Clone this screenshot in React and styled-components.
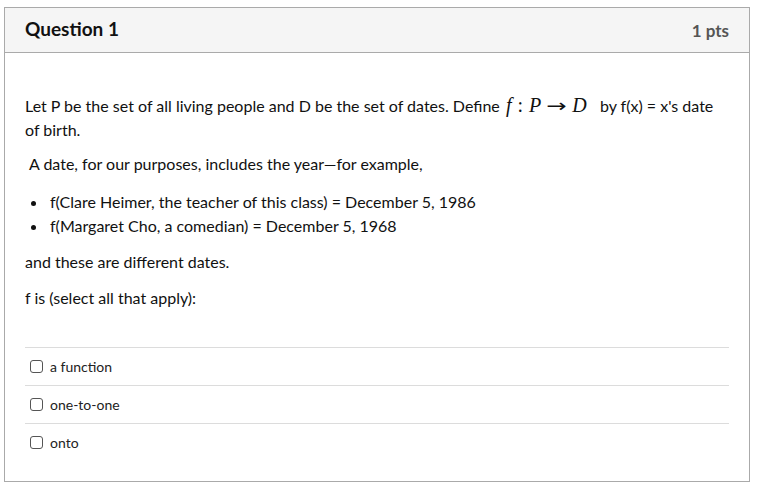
import React from "react";
import styled, { createGlobalStyle } from "styled-components";

const Global = createGlobalStyle`
  html, body { margin: 0; padding: 0; background: #fff; }
  body { font-family: Lato, "Open Sans", sans-serif; color: #2d3b45; }
`;

const Page = styled.div`
  padding: 7px 10px 0 4px;
`;

const Card = styled.div`
  width: 746px;
  box-sizing: border-box;
  border: 1px solid #aaaaaa;
  background: #fff;
`;

const Header = styled.div`
  height: 45px;
  box-sizing: border-box;
  display: flex;
  align-items: center;
  justify-content: space-between;
  padding: 0 20px;
  background: #f5f5f5;
  border-bottom: 1px solid #aaaaaa;
`;

const Title = styled.h2`
  margin: 0 0 3px 0;
  font-size: 19px;
  font-weight: 700;
  color: #111;
`;

const Points = styled.div`
  font-size: 17px;
  font-weight: 700;
  color: #555;
`;

const Body = styled.div`
  padding: 41px 20px 20px 20px;
  font-size: 16px;
  line-height: 24px;
  color: #111;
`;

const Para = styled.p`
  margin: 0 0 ${(p) => p.$mb ?? 12}px ${(p) => p.$indent || 0}px;
`;

const Math = styled.span`
  font-family: "Liberation Serif", "DejaVu Serif", serif;
  font-style: italic;
  font-size: 20px;
  line-height: 1;
  margin: 0 9px 0 2px;
  white-space: nowrap;
`;

const Op = styled.span`
  font-style: normal;
  font-family: "Liberation Serif", serif;
  font-size: 20px;
  line-height: 1;
  margin: 0 6px;
`;

const Arrow = styled.span`
  display: inline-block;
  font-style: normal;
  font-family: "DejaVu Sans", sans-serif;
  font-size: 18px;
  line-height: 1;
  margin: 0 7px;
  transform: scaleX(1.35);
  padding: 0 1px;
`;

const List = styled.ul`
  margin: 0 0 12px 0;
  padding-left: 23px;
  li { padding-left: 2px; }
`;

const Options = styled.div`
  margin-top: 37px;
`;

const Option = styled.label`
  display: flex;
  align-items: center;
  gap: 7px;
  height: 38px;
  box-sizing: border-box;
  border-top: 1px solid #dcdcdc;
  padding-left: 5px;
  font-size: 14px;
  color: #222;
`;

const Box = styled.span`
  width: 13px;
  height: 13px;
  box-sizing: border-box;
  border: 1px solid #555;
  border-radius: 3px;
  background: #fff;
  flex: none;
`;

export default function App() {
  return (
    <Page>
      <Global />
      <Card>
        <Header>
          <Title>Question 1</Title>
          <Points>1 pts</Points>
        </Header>
        <Body>
          <Para $mb={10}>
            Let P be the set of all living people and D be the set of dates. Define{" "}
            <Math>
              f<Op>:</Op>P<Arrow>→</Arrow>D
            </Math>{" "}
            by f(x) = x's date of birth.
          </Para>
          <Para $indent={4} $mb={14}>A date, for our purposes, includes the year—for example,</Para>
          <List>
            <li>f(Clare Heimer, the teacher of this class) = December 5, 1986</li>
            <li>f(Margaret Cho, a comedian) = December 5, 1968</li>
          </List>
          <Para>and these are different dates.</Para>
          <Para $mb={0}>f is (select all that apply):</Para>
          <Options>
            {["a function", "one-to-one", "onto"].map((t) => (
              <Option key={t}>
                <Box />
                {t}
              </Option>
            ))}
          </Options>
        </Body>
      </Card>
    </Page>
  );
}
